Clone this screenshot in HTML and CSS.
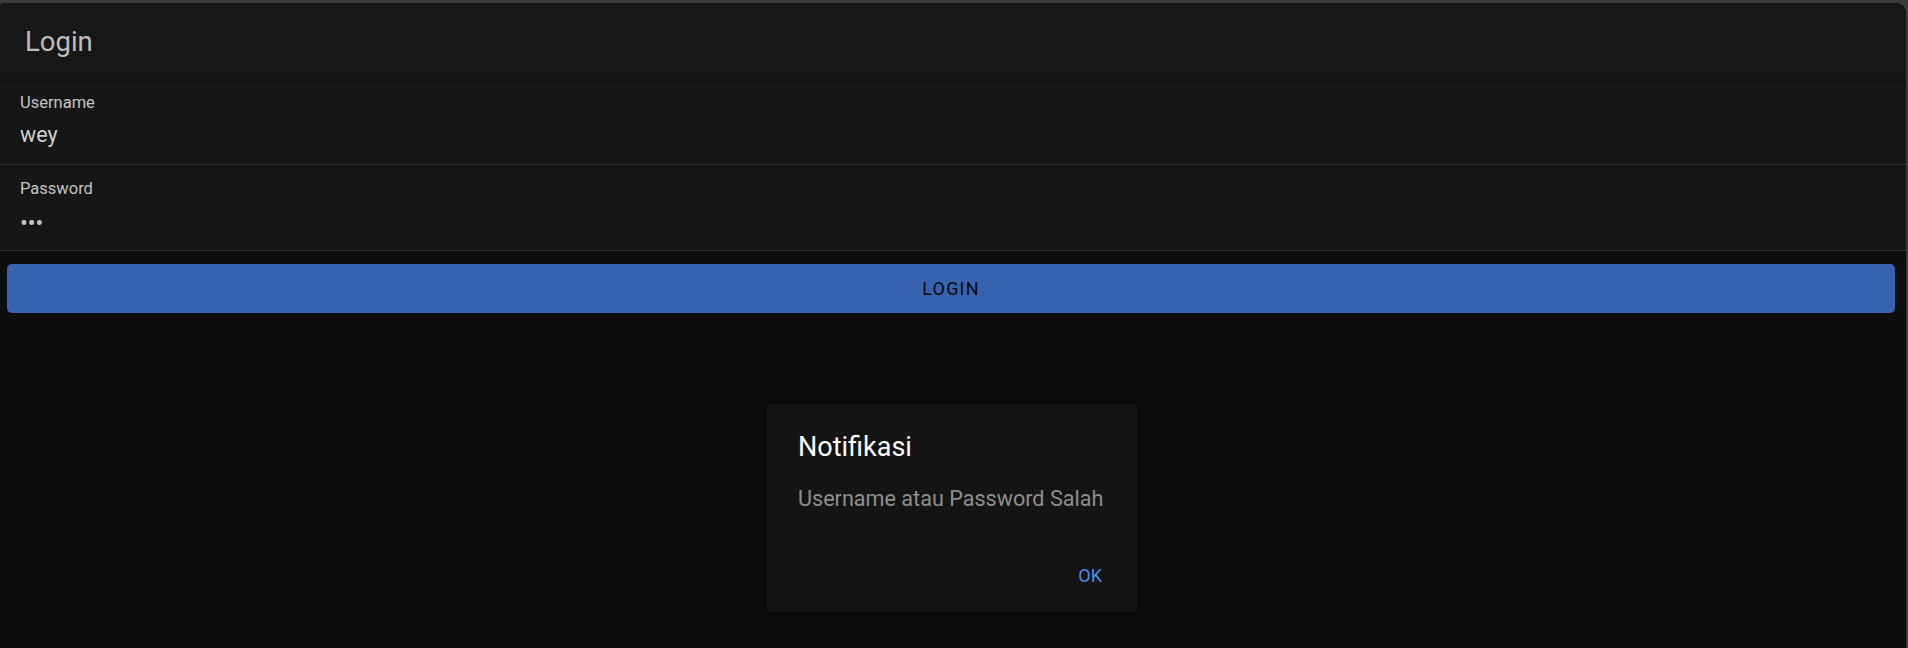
FILE: index.html
```html
<!DOCTYPE html>
<html lang="id">
<head>
<meta charset="utf-8">
<title>Login</title>
<link rel="stylesheet" href="styles.css">
</head>
<body>
<div class="app">
  <header class="navbar">
    <h1 class="navbar-title">Login</h1>
  </header>
  <form class="form">
    <div class="field">
      <label class="field-label">Username</label>
      <div class="field-value">wey</div>
    </div>
    <div class="field">
      <label class="field-label">Password</label>
      <div class="field-value dots">•••</div>
    </div>
    <div class="actions">
      <button type="button" class="btn-login">LOGIN</button>
    </div>
  </form>
  <div class="overlay">
    <div class="dialog">
      <div class="dialog-title">Notifikasi</div>
      <div class="dialog-text">Username atau Password Salah</div>
      <div class="dialog-buttons">
        <span class="dialog-btn">OK</span>
      </div>
    </div>
  </div>
</div>
</body>
</html>
```

FILE: styles.css
```css
* { box-sizing: border-box; }
html, body { margin: 0; height: 100%; }
body {
  background: #3b3b3b;
  font-family: Roboto, "Liberation Sans", Arial, sans-serif;
  overflow: hidden;
}
.app {
  position: relative;
  margin: 3px 2px 0 0;
  height: 645px;
  background: #0d0d0d;
  border-radius: 4px 10px 0 0;
  overflow: hidden;
}
.navbar {
  height: 76px;
  background: #171717;
  display: flex;
  align-items: center;
  padding-left: 25px;
  box-shadow: 0 2px 4px rgba(0,0,0,0.35);
  position: relative;
  z-index: 1;
}
.navbar-title {
  margin: 0;
  font-size: 27.5px;
  font-weight: 400;
  color: #bdbdbd;
}
.form { margin: 0; }
.field {
  background: #161616;
  height: 86px;
  border-bottom: 1px solid #2c2c2c;
  padding: 14px 20px 0 20px;
  display: flex;
  flex-direction: column;
}
.field-label {
  font-size: 16.5px;
  color: #c4c4c4;
  line-height: 20px;
}
.field-value {
  margin-top: 8px;
  font-size: 21.5px;
  color: #cfcfcf;
  line-height: 28px;
}
.dots { letter-spacing: 0; font-size: 23px; margin-top: 11px; color: #c4c4c4; }
.actions { padding: 13px 11px 0 7px; }
.btn-login {
  width: 100%;
  height: 49px;
  border: none;
  border-radius: 5px;
  background: #3662b0;
  color: #0a0a0a;
  font-family: inherit;
  font-size: 18px;
  letter-spacing: 1.2px;
  padding: 0;
}
.overlay {
  position: absolute;
  inset: 0;
  display: flex;
  justify-content: center;
  align-items: flex-start;
  padding-top: 401px;
  padding-right: 2px;
}
.dialog {
  width: 370px;
  height: 208px;
  background: #141414;
  border-radius: 5px;
  box-shadow: 0 0 24px rgba(0,0,0,0.6);
  padding: 26px 31px 0 31px;
  display: flex;
  flex-direction: column;
}
.dialog-title {
  color: #ffffff;
  font-size: 27px;
  line-height: 34px;
}
.dialog-text {
  margin-top: 21px;
  color: #8e8e8e;
  font-size: 21.6px;
  line-height: 28px;
}
.dialog-buttons {
  margin-top: auto;
  margin-bottom: 26px;
  display: flex;
  justify-content: flex-end;
}
.dialog-btn {
  color: #4a8be8;
  font-size: 18px;
  padding-right: 4px;
}
```
